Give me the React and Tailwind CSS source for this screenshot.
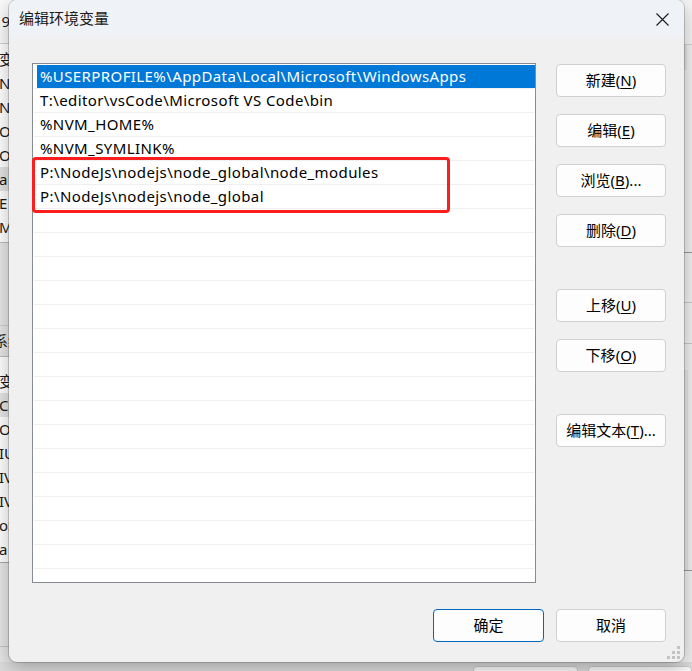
const paths = [
  "%USERPROFILE%\\AppData\\Local\\Microsoft\\WindowsApps",
  "T:\\editor\\vsCode\\Microsoft VS Code\\bin",
  "%NVM_HOME%",
  "%NVM_SYMLINK%",
  "P:\\NodeJs\\nodejs\\node_global\\node_modules",
  "P:\\NodeJs\\nodejs\\node_global",
];

const rows = Array.from({ length: 22 }, (_, i) => paths[i] || "");

const sideButtons = [
  { label: "新建", key: "N", after: ")", top: "mt-0" },
  { label: "编辑", key: "E", after: ")", top: "mt-[17px]" },
  { label: "浏览", key: "B", after: ")...", top: "mt-[17px]" },
  { label: "删除", key: "D", after: ")", top: "mt-[17px]" },
  { label: "上移", key: "U", after: ")", top: "mt-[42px]" },
  { label: "下移", key: "O", after: ")", top: "mt-[17px]" },
  { label: "编辑文本", key: "T", after: ")...", top: "mt-[42px]" },
];

const upperRows = ["变量", "NVM", "NVM", "Or", "Or", "a", "E", "M"];
const lowerRows = ["变量", "Co", "Or", "IU", "IV", "IV", "oS", "a"];

function Backdrop() {
  return (
    <div className="absolute inset-0 flex">
      {/* left edge of the parent window */}
      <div className="w-[40px] h-full flex flex-col bg-[#e6e6e6] text-[15px] text-[#1a1a1a] leading-none">
        <div className="h-[43px] bg-[#fafafa] flex items-center -ml-[7px]">191</div>
        <div className="h-px bg-[#d0d0d0]" />
        <div className="h-[198px] bg-white pt-[3px]">
          {upperRows.map((t, i) => (
            <div
              key={i}
              className={`h-[24px] flex items-center -ml-[1px] ${i === 5 ? "bg-[#e3e3e3]" : ""}`}
            >
              {t}
            </div>
          ))}
        </div>
        <div className="h-px bg-[#bdbdbd]" />
        <div className="h-[82px]" />
        <div className="h-px bg-[#d0d0d0]" />
        <div className="h-[30px] flex items-center -ml-[6px] text-[14px]">系统</div>
        <div className="h-px bg-[#bdbdbd]" />
        <div className="h-[205px] bg-white pt-[12px]">
          {lowerRows.map((t, i) => (
            <div
              key={i}
              className={`h-[24px] flex items-center -ml-[1px] ${i === 1 ? "bg-[#e5e5e5]" : ""}`}
            >
              {t}
            </div>
          ))}
        </div>
        <div className="h-px bg-[#a8a8a8]" />
        <div className="h-[83px]" />
        <div className="h-px bg-[#c4c4c4]" />
      </div>
      <div className="flex-1" />
      {/* right edge of the parent window */}
      <div className="w-[20px] h-full flex flex-col bg-[#f0f0f0]">
        <div className="h-[44px] bg-[#f5f5f5]" />
        <div className="h-px bg-[#d2d2d2]" />
        <div className="h-[25px] ml-[12px] w-[3px] bg-[#e2e2e2]" />
        <div className="h-[182px]" />
        <div className="h-px bg-[#9a9a9a]" />
        <div className="h-[49px]" />
        <div className="h-px bg-[#c8c8c8]" />
        <div className="h-[40px]" />
        <div className="h-px bg-[#c8c8c8]" />
        <div className="h-[26px]" />
        <div className="h-[200px] ml-[12px] w-[4px] bg-[#e4e4e4]" />
        <div className="h-px bg-[#9a9a9a]" />
      </div>
    </div>
  );
}

function BottomStrip() {
  return (
    <div className="absolute left-0 right-0 bottom-0 h-[9px] bg-[#dcdcdc] flex">
      <div className="ml-[473px] mt-[4px] w-[110px] h-[20px] bg-[#fbfbfb] border border-[#c9c9c9] rounded-[4px]" />
      <div className="ml-[10px] mt-[4px] w-[110px] h-[20px] bg-[#fbfbfb] border border-[#c9c9c9] rounded-[4px]" />
    </div>
  );
}

function Mnemonic({ label, k, after }) {
  return (
    <span>
      {label}(<span className="underline underline-offset-[2px]">{k}</span>
      {after}
    </span>
  );
}

function WinButton({ children, className = "", primary = false }) {
  return (
    <button
      className={`h-[33px] flex items-center justify-center rounded-[4px] bg-[#fdfdfd] text-[15px] text-black border ${
        primary ? "border-[#0067c0]" : "border-[#d0d0d0]"
      } ${className}`}
    >
      {children}
    </button>
  );
}

function ResizeGrip() {
  return (
    <svg className="absolute right-[3px] bottom-[2px]" width="14" height="14" viewBox="0 0 14 14">
      {[
        [10, 0],
        [5, 5],
        [10, 5],
        [0, 10],
        [5, 10],
        [10, 10],
      ].map(([x, y], i) => (
        <rect key={i} x={x} y={y} width="3" height="3" fill="#c2c2c2" />
      ))}
    </svg>
  );
}

export default function App() {
  return (
    <div className="relative w-[692px] h-[671px] overflow-hidden bg-[#e6e6e6] font-['Noto_Sans','Noto_Sans_CJK_SC',sans-serif]">
      <Backdrop />
      <BottomStrip />

      <div className="absolute left-[9px] top-0 w-[675px] h-[662px] flex flex-col bg-[#f0f0f0] rounded-[8px] overflow-hidden shadow-[0_0_0_1px_rgba(0,0,0,0.18),0_6px_20px_rgba(0,0,0,0.28)]">
        {/* title bar */}
        <div className="h-[37px] flex items-center bg-[#eff3f7] pl-[10px] pr-[15px]">
          <span className="text-[15px] text-[#1a1a1a]">编辑环境变量</span>
          <div className="flex-1" />
          <svg width="13" height="13" viewBox="0 0 13 13" className="mt-[1px]">
            <path d="M0.5 0.5 L12.5 12.5 M12.5 0.5 L0.5 12.5" stroke="#1a1a1a" strokeWidth="1.1" />
          </svg>
        </div>

        {/* body */}
        <div className="flex pl-[23px] pt-[26px]">
          <div className="relative w-[504px] h-[520px] bg-white border border-[#868a91] overflow-visible">
            <div className="h-full overflow-hidden pt-[1px]">
              {rows.map((p, i) => (
                <div key={i} className="h-[24px] flex flex-col">
                  <div
                    className={`h-[23px] flex items-center text-[15px] tracking-[0.4px] whitespace-nowrap ${
                      i === 0 ? "ml-[4px] pl-[3px] bg-[#0078d7] text-white" : "pl-[7px] text-black"
                    }`}
                  >
                    {p}
                  </div>
                  <div className="h-px mx-[1px] bg-[#efefef]" />
                </div>
              ))}
            </div>
            <div className="absolute left-[-1px] top-[93px] w-[418px] h-[56px] border-[3px] border-[#fa1e1e] rounded-[4px]" />
          </div>

          <div className="ml-[20px] w-[110px] flex flex-col pt-[1px]">
            {sideButtons.map((b) => (
              <WinButton key={b.key} className={b.top}>
                <Mnemonic label={b.label} k={b.key} after={b.after} />
              </WinButton>
            ))}
          </div>
        </div>

        {/* footer */}
        <div className="flex justify-end gap-[12px] pr-[18px] mt-[26px]">
          <WinButton primary className="w-[111px]">确定</WinButton>
          <WinButton className="w-[110px]">取消</WinButton>
        </div>

        <ResizeGrip />
      </div>
    </div>
  );
}
